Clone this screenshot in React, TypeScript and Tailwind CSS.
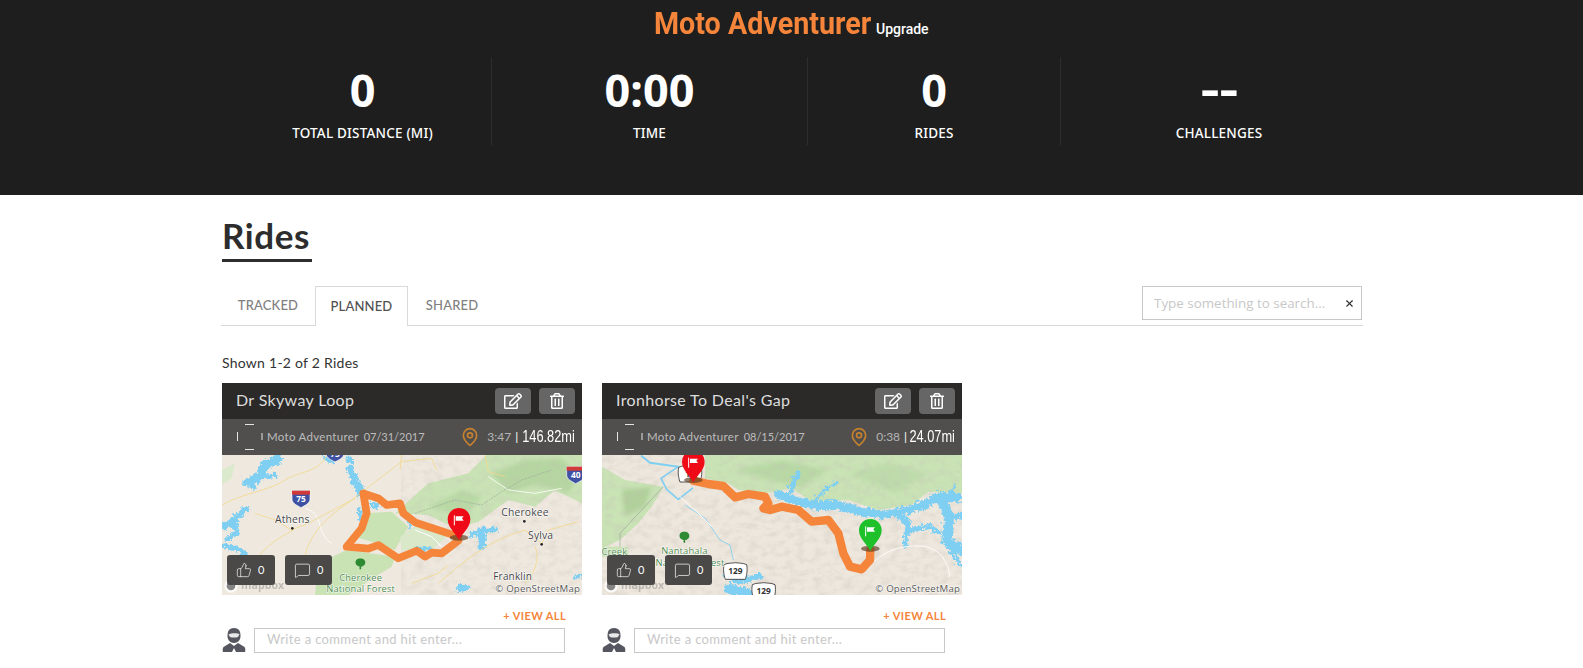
import { MapPin, MessageSquare, ThumbsUp, X } from "lucide-react";
import { FaRegEdit, FaRegTrashAlt } from "react-icons/fa";
import type { ReactNode } from "react";

const BLUE = "#7fcff2";
const GREEN = "#c9e3b5";
const ROUTE = "#f4853a";

function Pin({ cx, cy, fill }: { cx: number; cy: number; fill: string }) {
  return (
    <g>
      <ellipse cx={cx} cy={cy + 55} rx={28} ry={9} fill="#5a3a20" opacity={0.65} />
      <path
        d={`M${cx} ${cy + 62} C${cx - 8} ${cy + 44} ${cx - 34} ${cy + 26} ${cx - 34} ${cy} A34 34 0 1 1 ${cx + 34} ${cy} C${cx + 34} ${cy + 26} ${cx + 8} ${cy + 44} ${cx} ${cy + 62} Z`}
        fill={fill}
      />
      <path d={`M${cx - 14} ${cy - 12} V${cy + 18}`} stroke="#fff" strokeWidth={3} />
      <path d={`M${cx - 10} ${cy - 9} L${cx + 14} ${cy - 9} L${cx + 9} ${cy - 3} L${cx + 14} ${cy + 4} L${cx - 10} ${cy + 4} Z`} fill="#fff" />
    </g>
  );
}

function Shield({ x, y, label, kind }: { x: number; y: number; label: string; kind: "i" | "us" }) {
  if (kind === "i") {
    return (
      <g>
        <path d={`M${x - 27} ${y - 25} H${x + 27} V${y} C${x + 27} ${y + 14} ${x + 10} ${y + 20} ${x} ${y + 26} C${x - 10} ${y + 20} ${x - 27} ${y + 14} ${x - 27} ${y} Z`} fill="#3f51a3" stroke="#fff" strokeWidth={2} />
        <path d={`M${x - 27} ${y - 25} H${x + 27} V${y - 13} H${x - 27} Z`} fill="#d23a3a" />
        <text x={x} y={y + 10} textAnchor="middle" fontSize={25} fontWeight={700} fill="#fff" fontFamily="'Open Sans', sans-serif">{label}</text>
      </g>
    );
  }
  return (
    <g>
      <path d={`M${x - 34} ${y - 20} C${x - 22} ${y - 26} ${x - 10} ${y - 24} ${x} ${y - 26} C${x + 10} ${y - 24} ${x + 22} ${y - 26} ${x + 34} ${y - 20} C${x + 38} ${y} ${x + 32} ${y + 18} ${x + 30} ${y + 24} H${x - 30} C${x - 32} ${y + 18} ${x - 38} ${y} ${x - 34} ${y - 20} Z`} fill="#fff" stroke="#333" strokeWidth={2.5} />
      <text x={x} y={y + 9} textAnchor="middle" fontSize={25} fontWeight={700} fill="#333" fontFamily="'Open Sans', sans-serif">{label}</text>
    </g>
  );
}

function MapLabel({ x, y, children, fill = "#444", size = 31 }: { x: number; y: number; children: ReactNode; fill?: string; size?: number }) {
  return (
    <text x={x} y={y} textAnchor="middle" fontSize={size} fill={fill} stroke="#fff" strokeWidth={3} paintOrder="stroke" fontFamily="'Open Sans', sans-serif" letterSpacing={0.5}>
      {children}
    </text>
  );
}

function Defs({ id }: { id: string }) {
  return (
    <defs>
      <filter id={`${id}-terrain`} x="0" y="0" width="100%" height="100%">
        <feTurbulence type="fractalNoise" baseFrequency="0.035 0.05" numOctaves={4} seed={id === "a" ? 4 : 11} />
        <feColorMatrix values="0 0 0 0 0.55  0 0 0 0 0.52  0 0 0 0 0.46  1.7 0 0 0 -0.68" />
      </filter>
      <filter id={`${id}-soft`} x="-5%" y="-5%" width="110%" height="110%">
        <feGaussianBlur stdDeviation="1.4" />
      </filter>
      <filter id={`${id}-blur`} x="-10%" y="-10%" width="120%" height="120%">
        <feGaussianBlur stdDeviation="7" />
      </filter>
      <filter id={`${id}-rough`} x="-5%" y="-5%" width="110%" height="110%">
        <feTurbulence type="turbulence" baseFrequency="0.07" numOctaves={3} seed={7} result="n" />
        <feDisplacementMap in="SourceGraphic" in2="n" scale="22" xChannelSelector="R" yChannelSelector="G" />
      </filter>
    </defs>
  );
}

function MapOne() {
  return (
    <svg viewBox="21 15 1080 420" className="block w-[360px] h-[140px]">
      <Defs id="a" />
      <g filter="url(#a-soft)">
        <rect x="21" y="15" width="1080" height="420" fill="#eee8df" />
        <path d="M540 190 L640 100 L760 70 L815 15 L1101 15 L1101 160 L1020 120 L960 170 L880 150 L790 215 L720 235 L640 195 Z" fill={GREEN} />
        <path d="M830 70 L930 30 L1040 25 L1090 80 L1060 130 L960 105 L880 130 Z" fill="#b5d6a0" filter="url(#a-blur)" />
        <path d="M640 170 L740 120 L800 140 L750 200 Z" fill="#b8d9a4" filter="url(#a-blur)" />
        <rect x="560" y="20" width="541" height="415" filter="url(#a-terrain)" opacity="0.35" />
        <path d="M450 190 L530 185 L580 230 L540 300 L470 275 L420 260 Z" fill={GREEN} />
        <path d="M395 300 L540 320 L530 350 L480 380 L400 435 L300 435 L310 340 Z" fill={GREEN} />
        <path d="M555 260 L620 215 L700 255 L650 300 L560 300 Z" fill="#d8e8c8" />
        <path d="M21 60 L60 40 L50 85 L21 105 Z" fill="#dbe9cc" />
        <g fill="none" stroke={BLUE} strokeLinejoin="round" strokeLinecap="round" filter="url(#a-rough)">
          <path d="M90 95 L130 75 L145 42 L185 22" strokeWidth="28" />
          <path d="M130 75 L175 72 M100 85 L112 108" strokeWidth="14" />
          <path d="M325 20 L345 30 M395 20 L405 30" strokeWidth="14" />
          <path d="M402 55 L418 95 L436 130" strokeWidth="24" />
          <path d="M21 225 L60 200 L88 172" strokeWidth="20" />
          <path d="M50 205 L62 245 L30 262 M35 215 L60 225" strokeWidth="15" />
          <path d="M21 282 L70 295 L95 322" strokeWidth="15" />
          <path d="M470 160 L482 162" strokeWidth="18" />
          <path d="M430 175 L430 200" strokeWidth="14" />
          <path d="M765 250 L800 235 L838 235" strokeWidth="16" />
          <path d="M795 240 L797 278" strokeWidth="26" />
          <path d="M605 290 L640 292" strokeWidth="12" />
          <path d="M578 205 L580 225" strokeWidth="10" />
          <path d="M725 412 L750 408" strokeWidth="18" />
          <path d="M1075 375 L1101 368" strokeWidth="9" />
        </g>
        <g fill="none" stroke="#fff" strokeWidth="3">
          <path d="M270 175 C330 190 300 250 350 280" opacity="0.8" />
          <path d="M820 80 L880 120 L960 130 L1040 115" opacity="0.8" />
          <path d="M600 240 L650 260 L680 290" />
        </g>
        <g fill="none" stroke="#f3d88d" strokeWidth="2.5">
          <path d="M21 165 C80 130 170 120 210 90 C260 60 310 70 335 15" />
          <path d="M120 190 L180 210 L230 240 L280 220 L410 150 L560 35 L650 25 L665 60" />
          <path d="M270 320 C280 260 330 200 420 145" />
          <path d="M560 15 L555 60 M810 15 L820 65 L870 80" />
          <path d="M670 400 C740 340 820 270 930 240 L980 280 L1000 240 L1090 215" />
          <path d="M960 290 C980 330 950 380 930 400" />
          <path d="M130 320 C170 270 220 250 235 240" />
          <path d="M590 400 L670 370 L700 345" />
        </g>
        <path d="M600 190 L660 170 L720 150 L800 165 L860 125 L920 90 L1010 60" fill="none" stroke="#9aa89a" strokeWidth="2" strokeDasharray="6 3" />
        <circle cx="232" cy="235" r="4" fill="#222" />
        <circle cx="928" cy="214" r="4" fill="#222" />
        <circle cx="980" cy="283" r="4" fill="#222" />
      </g>
      <Shield x={258} y={147} label="75" kind="i" />
      <Shield x={360} y={10} label="75" kind="i" />
      <Shield x={1082} y={75} label="40" kind="i" />
      <MapLabel x={232} y={220}>Athens</MapLabel>
      <MapLabel x={930} y={198}>Cherokee</MapLabel>
      <MapLabel x={977} y={266}>Sylva</MapLabel>
      <MapLabel x={893} y={389} size={30}>Franklin</MapLabel>
      <MapLabel x={437} y={392} fill="#4e8a4c" size={28}>Cherokee</MapLabel>
      <MapLabel x={437} y={427} fill="#4e8a4c" size={28}>National Forest</MapLabel>
      <path d="M436 358 V345 M436 328 C450 325 455 345 436 348 C418 345 422 325 436 328 Z" fill="#2f8a34" stroke="#2f8a34" strokeWidth={5} />
      <path
        d="M730 272 L680 310 L650 308 L630 320 L605 302 L550 325 L490 285 L460 296 L395 290 L440 235 L455 190 L445 130 L490 145 L515 165 L555 160 L565 190 L600 217 L730 260"
        fill="none"
        stroke={ROUTE}
        strokeWidth={23}
        strokeLinejoin="round"
        strokeLinecap="round"
      />
      <Pin cx={732} cy={208} fill="#ee0a16" />
      <MapLabel x={968} y={426} size={29} fill="#555">© OpenStreetMap</MapLabel>
      <circle cx={48} cy={408} r={20} fill="#fff" opacity={0.85} />
      <circle cx={48} cy={408} r={13} fill="#666" opacity={0.8} />
      <text x={78} y={418} fontSize={32} fontWeight={700} fill="#777" opacity={0.4} fontFamily="'Open Sans', sans-serif">mapbox</text>
    </svg>
  );
}

function MapTwo() {
  return (
    <svg viewBox="21 15 1080 420" className="block w-[360px] h-[140px]">
      <Defs id="b" />
      <g filter="url(#b-soft)">
        <rect x="21" y="15" width="1080" height="420" fill="#eee7dd" />
        <path d="M330 15 L1101 15 L1101 130 L1000 125 L950 165 L850 180 L760 150 L650 155 L590 115 L540 125 L500 130 L430 120 L400 100 L330 85 Z" fill={GREEN} />
        <path d="M420 60 L560 30 L700 60 L620 110 L520 90 Z" fill="#b8d9a4" filter="url(#b-blur)" />
        <path d="M760 70 L880 40 L1000 70 L900 130 Z" fill="#bedcab" filter="url(#b-blur)" />
        <path d="M21 50 L90 90 L205 110 L170 170 L130 220 L75 270 L21 295 Z" fill={GREEN} />
        <path d="M80 120 L170 110 L150 170 L90 200 Z" fill="#b0d19a" filter="url(#b-blur)" />
        <path d="M21 290 L100 290 L100 320 L21 320 Z" fill={GREEN} />
        <rect x="21" y="15" width="1080" height="420" filter="url(#b-terrain)" opacity="0.42" />
        <g fill="none" stroke={BLUE} strokeLinejoin="round" strokeLinecap="round" filter="url(#b-rough)">
          <path d="M545 128 L590 145 L650 162 L720 160 L790 180 L860 190 L920 180 L980 160 L1030 135 L1085 140" strokeWidth="26" />
          <path d="M578 128 L603 65" strokeWidth="14" />
          <path d="M650 150 L690 112 L722 90" strokeWidth="8" />
          <path d="M905 190 L935 215 L925 280" strokeWidth="16" />
          <path d="M930 235 L990 225 L1030 240" strokeWidth="14" />
          <path d="M1030 135 L1060 200 L1050 270 L1101 300" strokeWidth="30" />
          <path d="M1060 130 L1075 100" strokeWidth="9" />
          <path d="M1060 200 L1101 190" strokeWidth="20" />
          <path d="M1050 270 L1090 340" strokeWidth="11" />
          <path d="M388 368 L420 388 L492 376" strokeWidth="18" />
          <path d="M395 410 L472 430" strokeWidth="28" />
        </g>
        <g fill="none" stroke={BLUE} strokeLinejoin="round" strokeLinecap="round">
          <path d="M140 18 L165 38 L250 50" strokeWidth="6" />
          <path d="M250 50 L198 85 L215 118 L250 148 L292 115" strokeWidth="5" />
          <path d="M270 165 L330 205 L375 270 L405 285 L415 330" strokeWidth="2.5" />
        </g>
        <path d="M205 110 L140 180 L75 250 L75 290" fill="none" stroke="#9aa89a" strokeWidth="2" />
        <g fill="none" stroke="#fff" strokeWidth="3">
          <path d="M820 350 C860 310 910 280 990 290 C1040 300 1060 340 1065 380" opacity="0.85" />
          <path d="M255 140 L300 180 L350 230" strokeWidth="2.5" />
        </g>
      </g>
      <Shield x={285} y={72} label="19" kind="us" />
      <Shield x={421} y={364} label="129" kind="us" />
      <Shield x={506} y={424} label="129" kind="us" />
      <MapLabel x={58} y={315} fill="#4e8a4c" size={28}>Creek</MapLabel>
      <MapLabel x={268} y={312} fill="#4e8a4c" size={28}>Nantahala</MapLabel>
      <MapLabel x={285} y={348} fill="#4e8a4c" size={28}>National Forest</MapLabel>
      <path d="M268 278 V265 M268 248 C282 245 287 265 268 268 C250 265 254 245 268 248 Z" fill="#2f8a34" stroke="#2f8a34" strokeWidth={5} />
      <path
        d="M295 92 L340 102 L385 108 L420 142 L460 132 L510 140 L520 160 L505 175 L525 180 L560 170 L610 180 L650 215 L700 210 L730 250 L745 310 L765 350 L800 358 L825 330 L826 300"
        fill="none"
        stroke={ROUTE}
        strokeWidth={25}
        strokeLinejoin="round"
        strokeLinecap="round"
      />
      <Pin cx={295} cy={35} fill="#ee0a16" />
      <Pin cx={826} cy={241} fill="#1ec12a" />
      <MapLabel x={968} y={426} size={29} fill="#555">© OpenStreetMap</MapLabel>
      <circle cx={48} cy={408} r={20} fill="#fff" opacity={0.85} />
      <circle cx={48} cy={408} r={13} fill="#666" opacity={0.8} />
      <text x={78} y={418} fontSize={32} fontWeight={700} fill="#777" opacity={0.4} fontFamily="'Open Sans', sans-serif">mapbox</text>
    </svg>
  );
}

function BrokenAvatar() {
  return (
    <svg width="26" height="26" viewBox="0 0 26 26" className="shrink-0">
      <g stroke="#e5e5e5" strokeWidth="1" fill="none">
        <path d="M8 0.5 H17" />
        <path d="M8 25.5 H17" />
        <path d="M0.5 8 V17" />
        <path d="M25 9 V16" />
      </g>
    </svg>
  );
}

function RiderIcon() {
  return (
    <svg width="24" height="26" viewBox="0 0 24 26" className="shrink-0">
      <path d="M12 1 C6.5 1 5.5 5 5.5 9 C5.5 13 8 16 12 16 C16 16 18.5 13 18.5 9 C18.5 5 17.5 1 12 1 Z" fill="#565660" />
      <path d="M6.5 7.5 C9 6 15 6 17.5 7 L16 10 C13 11 10 10.5 8 10 Z" fill="#e8e8e8" />
      <path d="M8 16 L1.5 20 C0.5 21 0.5 24 1 25 L10 25 L12 21 L14 25 L23 25 C23.5 24 23.5 21 22.5 20 L16 16 L12 19 Z" fill="#565660" />
    </svg>
  );
}

function Stat({ value, label, width, border, valueClass = "" }: { value: string; label: string; width: string; border: boolean; valueClass?: string }) {
  return (
    <div className={`${width} h-[88px] shrink-0 flex flex-col items-center ${border ? "border-r border-[#2d2d2d]" : ""}`}>
      <div className={`h-[64px] flex items-center text-[45px] font-bold leading-none text-white font-['Noto_Sans',sans-serif] ${valueClass}`}>{value}</div>
      <div className="mt-[2px] text-[13.5px] leading-5 font-medium tracking-[0.2px] text-white font-['Noto_Sans',sans-serif]">{label}</div>
    </div>
  );
}

function Card({ title, date, time, miles, map }: { title: string; date: string; time: string; miles: string; map: ReactNode }) {
  return (
    <div className="w-[360px] shrink-0">
      <div className="h-[36px] bg-[#2b2a28] flex items-center pl-[14px] pr-[7px]">
        <div className="flex-1 -mt-[3px] text-[16px] tracking-[0.35px] text-[#dddddd] font-['Lato',sans-serif]">{title}</div>
        <div className="flex gap-[8px]">
          <div className="w-[36px] h-[26px] rounded-[4px] bg-[#666666] flex items-center justify-center text-white"><FaRegEdit size={18} /></div>
          <div className="w-[36px] h-[26px] rounded-[4px] bg-[#666666] flex items-center justify-center text-white"><FaRegTrashAlt size={16} /></div>
        </div>
      </div>
      <div className="h-[36px] bg-[#504f4d] flex items-center pl-[15px] pr-[7px]">
        <BrokenAvatar />
        <span className="ml-[4px] text-[11.5px] tracking-[0.3px] text-[#bdbdbd] font-['Lato',sans-serif]">Moto Adventurer</span>
        <span className="ml-[5px] text-[11px] text-[#bdbdbd] font-['Lato',sans-serif]">{date}</span>
        <div className="flex-1 flex items-center justify-end">
          <MapPin size={20} strokeWidth={2} className="text-[#c5812f] mr-[7px]" />
          <span className="text-[12px] text-[#b5b5b5] font-['Lato',sans-serif]">{time}</span>
          <span className="ml-[4px] text-[12px] text-white font-['Lato',sans-serif]">|</span>
          <span className="inline-block -ml-[9px] whitespace-nowrap text-[16px] text-white font-['Liberation_Sans',sans-serif] scale-x-[0.8] origin-right">{miles}</span>
        </div>
      </div>
      <div className="relative h-[140px] overflow-hidden">
        {map}
        <div className="absolute left-[5px] top-[100px] w-[48px] h-[30px] rounded-[3px] bg-[#4a4948] flex items-center pl-[9px] gap-[6px] text-white">
          <ThumbsUp size={16} strokeWidth={1} />
          <span className="text-[11px] font-['Lato',sans-serif]">0</span>
        </div>
        <div className="absolute left-[63px] top-[100px] w-[47px] h-[30px] rounded-[3px] bg-[#4a4948] flex items-center pl-[9px] gap-[6px] text-white">
          <MessageSquare size={17} strokeWidth={1} />
          <span className="text-[11px] font-['Lato',sans-serif]">0</span>
        </div>
      </div>
      <div className="mt-[14px] pr-[16px] h-[14px] flex items-center justify-end text-[11px] font-bold tracking-[0.4px] text-[#f4853a] font-['Lato',sans-serif]">+ VIEW ALL</div>
      <div className="mt-[4px] flex items-center">
        <RiderIcon />
        <div className="ml-[8px] w-[311px] h-[25px] border border-[#c8c8c8] flex items-center pl-[12px] text-[13px] tracking-[0.35px] text-[#c8c8c8] font-['Lato',sans-serif]">Write a comment and hit enter...</div>
      </div>
    </div>
  );
}

export default function App() {
  return (
    <div className="w-[1583px] h-[668px] overflow-hidden bg-white">
      <header className="h-[195px] bg-[#1e1e1e]">
        <div className="h-[57px] flex items-start justify-center pt-[5px]">
          <span className="w-[214px] shrink-0"><span className="inline-block whitespace-nowrap text-[31px] leading-[38px] font-bold text-[#f4853a] font-['Roboto',sans-serif] scale-x-[0.925] origin-left">Moto Adventurer</span></span>
          <span className="w-[53px] shrink-0 ml-[8px] mt-[14px] whitespace-nowrap text-[14px] leading-5 font-medium text-white font-['Roboto',sans-serif]">Upgrade</span>
        </div>
        <div className="flex pl-[234px]">
          <Stat value="0" label="TOTAL DISTANCE (MI)" width="w-[258px]" border />
          <Stat value="0:00" label="TIME" width="w-[316px]" border />
          <Stat value="0" label="RIDES" width="w-[253px]" border />
          <Stat value="--" label="CHALLENGES" width="w-[316px]" border={false} valueClass="scale-x-[1.3] -translate-y-[2px]" />
        </div>
      </header>
      <main className="w-[1142px] ml-[221px]">
        <div className="pt-[18px] pl-[1px]">
          <h1 className="inline-block h-[49px] w-[90px] border-b-[3px] border-[#2d2d2d] text-[35px] leading-[44px] font-bold tracking-[0.6px] text-[#2d2d2d] font-['Lato',sans-serif]">Rides</h1>
        </div>
        <div className="mt-[24px] h-[40px] flex items-end border-b border-[#d9d9d9]">
          <div className="w-[94px] h-[39px] flex items-center justify-center text-[13px] font-medium tracking-[0.15px] text-[#808080] font-['Lato',sans-serif]">TRACKED</div>
          <div className="w-[93px] h-[40px] -mb-px bg-white border border-b-0 border-[#d9d9d9] flex items-center justify-center text-[13px] font-medium tracking-[0.15px] text-[#505050] font-['Lato',sans-serif]">PLANNED</div>
          <div className="w-[88px] h-[39px] flex items-center justify-center text-[13px] font-medium tracking-[0.15px] text-[#808080] font-['Lato',sans-serif]">SHARED</div>
          <div className="flex-1 flex justify-end pr-[1px] pb-[5px]">
            <div className="w-[220px] h-[34px] border border-[#c8c8c8] flex items-center pl-[11px] pr-[6px] text-[13.4px] text-[#c8c8c8] font-['Open_Sans',sans-serif]">
              <span className="flex-1">Type something to search...</span>
              <X size={11} strokeWidth={2.5} className="text-[#333333]" />
            </div>
          </div>
        </div>
        <div className="mt-[27px] pl-[1px] h-[20px] text-[14px] leading-5 tracking-[0.25px] text-[#333333] font-['Lato',sans-serif]">Shown 1-2 of 2 Rides</div>
        <div className="mt-[10px] pl-[1px] flex gap-[20px]">
          <Card title="Dr Skyway Loop" date="07/31/2017" time="3:47" miles="146.82mi" map={<MapOne />} />
          <Card title="Ironhorse To Deal's Gap" date="08/15/2017" time="0:38" miles="24.07mi" map={<MapTwo />} />
        </div>
      </main>
    </div>
  );
}
